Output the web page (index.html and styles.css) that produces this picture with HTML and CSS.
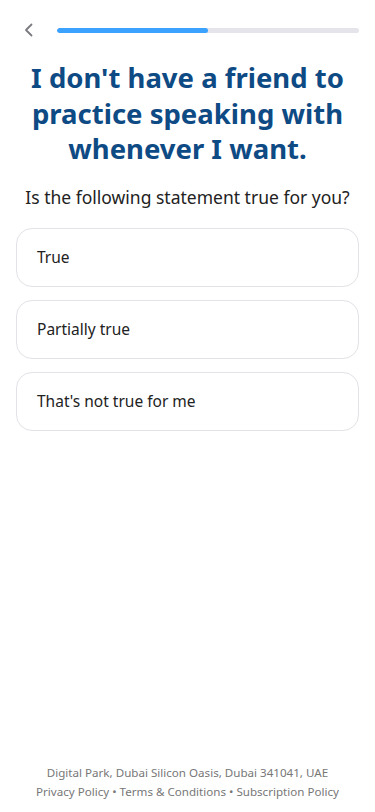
FILE: index.html
```html
<!DOCTYPE html>
<html>
<head>
<meta charset="utf-8">
<meta name="viewport" content="width=device-width, initial-scale=1">
<link rel="stylesheet" href="styles.css">
</head>
<body>
<div class="page">
  <header class="topbar">
    <button class="back" aria-label="Back">
      <svg width="12" height="14" viewBox="0 0 12 14"><path d="M8.5 1.5 L3 7 L8.5 12.5" fill="none" stroke="#7a7a80" stroke-width="1.8" stroke-linecap="round" stroke-linejoin="round"/></svg>
    </button>
    <div class="progress"><div class="progress-fill" style="width:50%"></div></div>
  </header>
  <main class="content">
    <h1 class="title">I don't have a friend to practice speaking with whenever I want.</h1>
    <p class="question">Is the following statement true for you?</p>
    <div class="options">
      <button class="option">True</button>
      <button class="option">Partially true</button>
      <button class="option">That's not true for me</button>
    </div>
  </main>
  <footer class="footer">
    <p>Digital Park, Dubai Silicon Oasis, Dubai 341041, UAE</p>
    <p>Privacy Policy • Terms &amp; Conditions • Subscription Policy</p>
  </footer>
</div>
</body>
</html>
```
FILE: styles.css
```css
* { box-sizing: border-box; }
html, body { margin: 0; padding: 0; background: #fff; }
body { font-family: "Noto Sans", "Open Sans", sans-serif; color: #222; }
.page { min-height: 812px; display: flex; flex-direction: column; }
.topbar { display: flex; align-items: center; padding: 22px 16px 0 22px; height: 38px; }
.back { border: 0; background: none; padding: 0; width: 14px; height: 16px; display: flex; align-items: center; justify-content: center; margin-right: 21px; }
.progress { flex: 1; height: 5px; border-radius: 3px; background: #e4e4ea; overflow: hidden; }
.progress-fill { height: 100%; background: #3ca2ff; border-radius: 3px; }
.content { flex: 1; padding: 0 16px; }
.title { margin: 22px 0 0; text-align: center; color: #0e4a84; font-size: 27.5px; font-weight: 700; line-height: 35.5px; }
.question { margin: 18px 0 0; text-align: center; font-size: 17.5px; line-height: 24px; color: #222; }
.options { margin-top: 19px; display: flex; flex-direction: column; gap: 13px; }
.option { font-family: inherit; text-align: left; height: 59px; border: 1px solid #e2e2e7; border-radius: 16px; background: #fff; padding: 0 20px; font-size: 15.5px; color: #222; }
.footer { text-align: center; color: #777; font-size: 11.6px; line-height: 19px; padding-bottom: 11px; }
.footer p { margin: 0; }
```
